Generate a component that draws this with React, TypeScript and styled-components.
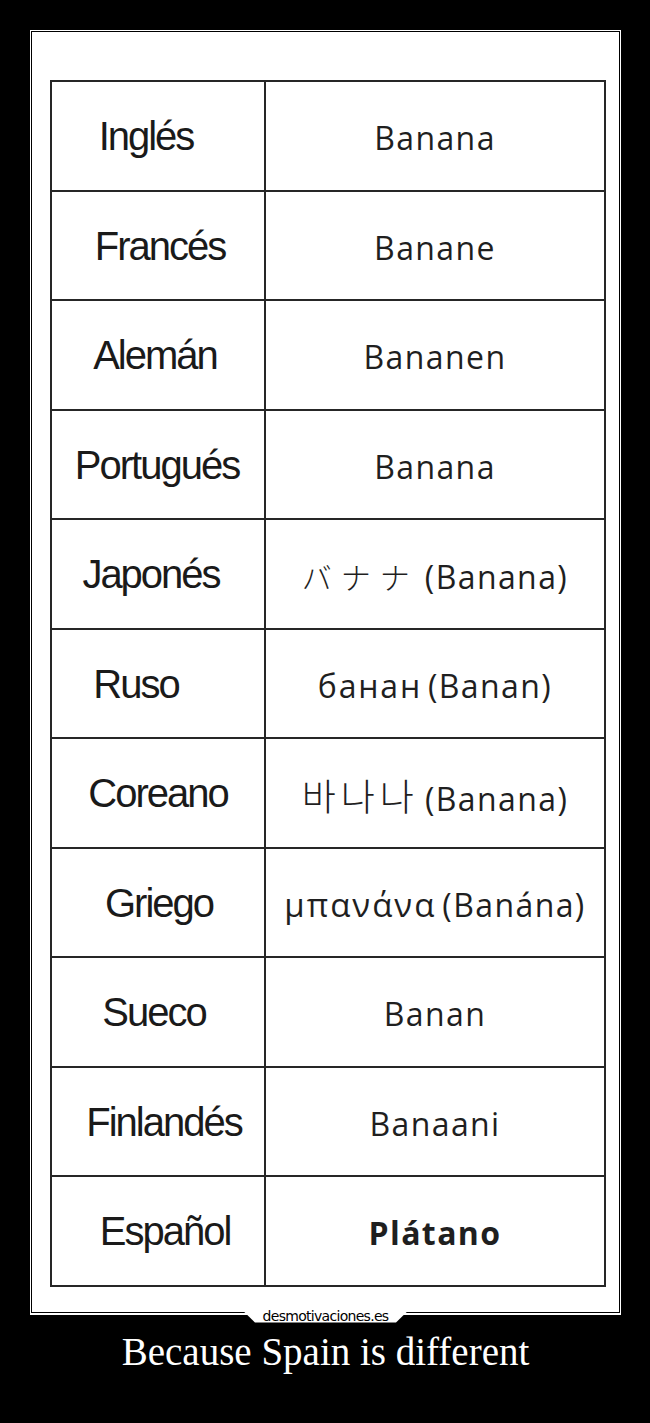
import styled, { createGlobalStyle } from "styled-components";

const GlobalStyle = createGlobalStyle`
    html, body {
        margin: 0;
        padding: 0;
        background: #000;
    }
`;

const Page = styled.main`
    width: 650px;
    min-height: 1423px;
    padding: 30px 0 0 30px;
    box-sizing: border-box;
    background: #000;
`;

const Frame = styled.div`
    position: relative;
    width: 591px;
    border: 1px solid #fff;
    border-bottom-width: 2px;
    padding: 1px;
    box-sizing: border-box;
    background: #000;
`;

const Panel = styled.div`
    background: #fff;
    padding: 48px 12px 25px 18px;
`;

const Table = styled.table`
    width: 556px;
    height: 1205px;
    border-collapse: collapse;
    table-layout: fixed;
`;

const Row = styled.tr`
    height: 109.5px;
`;

const Lang = styled.td<{ $shift: number }>`
    width: 212px;
    border: 2px solid #262626;
    text-align: center;
    vertical-align: middle;
    font-family: "Liberation Sans", Arial, sans-serif;
    font-size: 40px;
    letter-spacing: -2px;
    color: #1a1a1a;
    padding: 2px 0 0;
    & > span {
        position: relative;
        left: ${(p) => p.$shift}px;
    }
`;

const Word = styled.td<{ $bold?: boolean }>`
    border: 2px solid #262626;
    text-align: center;
    vertical-align: middle;
    font-family: "Open Sans", sans-serif;
    font-size: 32px;
    letter-spacing: 1.4px;
    font-weight: ${(p) => (p.$bold ? 700 : 400)};
    color: #1f1f1f;
    padding: 4px 0 0;
    white-space: nowrap;
`;

const Native = styled.span<{ $font: string; $size: number; $spacing: number; $light?: boolean }>`
    font-family: ${(p) => p.$font}, sans-serif;
    font-size: ${(p) => p.$size}px;
    letter-spacing: ${(p) => p.$spacing}px;
    font-weight: ${(p) => (p.$light ? 300 : 400)};
    margin-right: 6px;
`;

const Badge = styled.div`
    position: absolute;
    left: 50%;
    bottom: -10px;
    transform: translateX(-50%);
    width: 164px;
    height: 14px;
    background: #fff;
    clip-path: polygon(0 20%, 5% 0, 95% 0, 100% 20%, 93% 100%, 7% 100%);
    display: flex;
    align-items: center;
    justify-content: center;
`;

const BadgeText = styled.span`
    font-family: "DejaVu Sans", sans-serif;
    font-size: 14px;
    letter-spacing: -0.7px;
    color: #000;
    line-height: 1;
`;

const Caption = styled.h1`
    margin: 15px 0 0;
    width: 591px;
    text-align: center;
    font-family: "Liberation Serif", "Times New Roman", serif;
    font-weight: 400;
    font-size: 39px;
    line-height: 44px;
    color: #fff;
`;

type Native = { text: string; font: string; size: number; spacing: number; light?: boolean };

type Entry = {
    lang: string;
    shift: number;
    word: string;
    native?: Native;
    bold?: boolean;
};

const rows: Entry[] = [
    { lang: "Inglés", shift: -12, word: "Banana" },
    { lang: "Francés", shift: 2, word: "Banane" },
    { lang: "Alemán", shift: -3, word: "Bananen" },
    { lang: "Portugués", shift: -1, word: "Banana" },
    {
        lang: "Japonés",
        shift: -7,
        word: "(Banana)",
        native: { text: "バナナ", font: '"Noto Sans CJK JP"', size: 30, spacing: 9, light: true },
    },
    {
        lang: "Ruso",
        shift: -22,
        word: "(Banan)",
        native: { text: "банан", font: '"Open Sans"', size: 32, spacing: 1.8 },
    },
    {
        lang: "Coreano",
        shift: 0,
        word: "(Banana)",
        native: { text: "바나나", font: '"Noto Sans CJK KR"', size: 37, spacing: 5, light: true },
    },
    {
        lang: "Griego",
        shift: 1,
        word: "(Banána)",
        native: { text: "μπανάνα", font: '"Open Sans"', size: 33, spacing: 2 },
    },
    { lang: "Sueco", shift: -4, word: "Banan" },
    { lang: "Finlandés", shift: 6, word: "Banaani" },
    { lang: "Español", shift: 7, word: "Plátano", bold: true },
];

export default function App() {
    return (
        <Page>
            <GlobalStyle />
            <Frame>
                <Panel>
                    <Table>
                        <tbody>
                            {rows.map((r) => (
                                <Row key={r.lang}>
                                    <Lang $shift={r.shift}>
                                        <span>{r.lang}</span>
                                    </Lang>
                                    <Word $bold={r.bold}>
                                        {r.native && (
                                            <Native
                                                $font={r.native.font}
                                                $size={r.native.size}
                                                $spacing={r.native.spacing}
                                                $light={r.native.light}
                                            >
                                                {r.native.text}
                                            </Native>
                                        )}
                                        {r.word}
                                    </Word>
                                </Row>
                            ))}
                        </tbody>
                    </Table>
                </Panel>
                <Badge>
                    <BadgeText>desmotivaciones.es</BadgeText>
                </Badge>
            </Frame>
            <Caption>Because Spain is different</Caption>
        </Page>
    );
}
